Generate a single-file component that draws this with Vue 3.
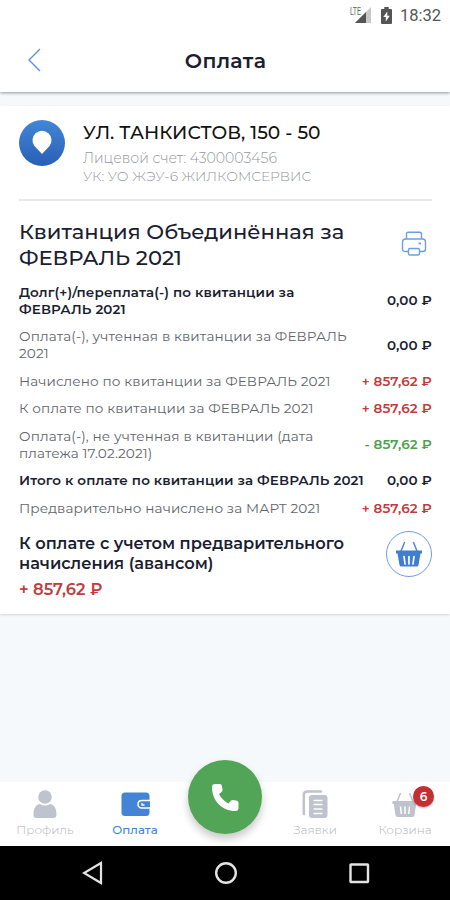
<template>
  <div class="screen">
    <header class="header">
      <div class="status-bar">
        <svg class="signal" width="22" height="18" viewBox="0 0 22 18">
          <path d="M21 1v16H5z" fill="#c9c9c9" />
          <path d="M16 6V17H5z" fill="#555" />
          <text x="0" y="9" font-size="11" textLength="11" lengthAdjust="spacingAndGlyphs">LTE</text>
        </svg>
        <svg class="battery" width="11" height="17" viewBox="0 0 11 17">
          <path d="M3.300 0h4.400v2H10q1 0 1 1v13q0 1-1 1H1q-1 0-1-1V3q0-1 1-1h2.300z" fill="#555" />
          <path d="M6.300 4.500 2.300 10h2.500v4.500L8.800 8.800H6.300z" fill="#fff" />
        </svg>
        <span class="clock">18:32</span>
      </div>
      <div class="nav-bar">
        <svg class="back" width="14" height="24" viewBox="0 0 14 24">
          <path d="M12 1 1 12 12 23" fill="none" stroke="#5d92df" stroke-width="1.400" />
        </svg>
        <h1>Оплата</h1>
      </div>
    </header>

    <main class="content">
      <section class="card">
        <div class="account">
          <svg width="46" height="46" viewBox="0 0 46 46">
            <defs>
              <linearGradient id="pin" x1="0" y1="0" x2="0" y2="1">
                <stop offset="0" stop-color="#4486d6" />
                <stop offset="1" stop-color="#285fb6" />
              </linearGradient>
            </defs>
            <circle cx="23" cy="23" r="23" fill="url(#pin)" />
            <path d="M23 34 15.500 26A9.500 9.500 0 1 1 30.500 26Z" fill="#fff" />
          </svg>
          <div class="account-info">
            <div class="address">УЛ. ТАНКИСТОВ, 150 - 50</div>
            <div class="number">Лицевой счет: 4300003456</div>
            <div class="company">УК: УО ЖЭУ-6 ЖИЛКОМСЕРВИС</div>
          </div>
        </div>

        <div class="receipt-title">
          <h2>Квитанция Объединённая за<br />ФЕВРАЛЬ 2021</h2>
          <svg width="26" height="26" viewBox="0 0 26 26" fill="none" stroke="#6d9ee3" stroke-width="1.400">
            <path d="M5.500 8V3q0-1.800 1.800-1.800h11.400q1.800 0 1.800 1.800v5" />
            <path d="M7.500 20.500H4q-2.500 0-2.500-2.500v-7Q1.500 8 4.500 8h17q3 0 3 3v7q0 2.500-2.500 2.500h-3.500" />
            <rect x="7.500" y="17.500" width="11" height="6.500" rx="1.500" />
            <path d="M17.500 12.500h2.500" stroke-width="1.800" />
          </svg>
        </div>

        <div class="rows">
          <div v-for="row in rows" :key="row.key" class="row" :class="row.key">
            <div class="label">
              <div v-for="line in row.lines" :key="line">{{ line }}</div>
            </div>
            <div class="amount" :class="row.kind">{{ row.amount }}</div>
          </div>
        </div>

        <div class="total">
          <div>
            <div class="total-label">К оплате с учетом предварительного<br />начисления (авансом)</div>
            <div class="total-amount">+ 857,62 ₽</div>
          </div>
          <button class="cart-button">
            <svg width="28" height="26" viewBox="0 0 28 26">
              <path d="M6 10 9.500 1.500M22 10 18.500 1.500" stroke="#4b88d6" stroke-width="1.500" stroke-linecap="round" />
              <path d="M1 9.500h26v3h-1.500L23.500 24q-.3 1.500-2 1.500h-15q-1.700 0-2-1.500L2.500 12.500H1z" fill="#3f7fd2" />
              <path d="m9 15.500 1 7.500M14 15.500V23M19 15.500 18 23" stroke="#fff" stroke-width="1.700" stroke-linecap="round" />
            </svg>
          </button>
        </div>
      </section>
    </main>

    <nav class="tabs">
      <div class="tab profile">
        <svg width="24" height="28" viewBox="0 0 24 28" fill="#bec3cd">
          <circle cx="12" cy="7" r="6.800" />
          <path d="M.5 24.500C.5 18 3 14.500 7 14q5 3 10 0c4 .5 6.500 4 6.500 10.500q0 3.500-3 3.500h-17q-3 0-3-3.500z" />
        </svg>
        <span>Профиль</span>
      </div>
      <div class="tab payment active">
        <svg width="29" height="28" viewBox="0 0 29 28">
          <rect x=".5" y="2.500" width="28" height="23.500" rx="3.500" fill="#4384d6" />
          <path d="M29 10.500h-8q-4 0-4 3.700t4 3.700h8" fill="#4384d6" stroke="#fff" stroke-width="1.500" />
          <path d="M21 13v2h2.500" fill="none" stroke="#fff" stroke-width="1.300" />
        </svg>
        <span>Оплата</span>
      </div>
      <div class="tab call">
        <button class="call-button">
          <svg width="28" height="29" viewBox="0 0 28 29">
            <path d="M4 1h5q1.500 0 1.800 1.600l.7 4q.2 1.500-.8 2.300L8 11q3 6 9.500 9.500l2.300-2.800q.8-1 2.200-.7l4 .8q1.500.4 1.500 1.900V25q0 3-3 3C11 28 1 18 1 4q0-3 3-3z" fill="#fff" />
          </svg>
        </button>
      </div>
      <div class="tab requests">
        <svg width="26" height="28" viewBox="0 0 26 28">
          <path d="M1.800 24V5q0-3.500 3.500-3.500H19" fill="none" stroke="#bec3cd" stroke-width="2.500" stroke-linecap="round" />
          <rect x="7" y="5" width="18.500" height="23" rx="3" fill="#bec3cd" />
          <path d="M11.500 10.500h9M11.500 14.500h9M11.500 19h9M11.500 23.500h9" stroke="#fff" stroke-width="1.500" />
        </svg>
        <span>Заявки</span>
      </div>
      <div class="tab cart">
        <div class="tab-icon">
          <svg width="26" height="28" viewBox="0 0 26 28">
            <path d="M5 12 8.500 3M21 12 17.500 3" stroke="#bec3cd" stroke-width="1.500" />
            <path d="M.5 11h25v3h-1.300L22.500 25q-.3 2-2 2h-15q-1.700 0-2-2L1.800 14H.5z" fill="#bec3cd" />
            <path d="m8.500 16.500.8 7.500M13 16.500V24M17.500 16.500l-.8 7.500" stroke="#fff" stroke-width="1.500" />
          </svg>
          <span class="badge">6</span>
        </div>
        <span>Корзина</span>
      </div>
    </nav>

    <footer class="system-bar">
      <svg width="21" height="24" viewBox="0 0 21 24">
        <path d="M19 2v20L2 12z" fill="none" stroke="#e4e4e4" stroke-width="2.200" />
      </svg>
      <svg width="24" height="24" viewBox="0 0 24 24">
        <circle cx="12" cy="12" r="9.800" fill="none" stroke="#e4e4e4" stroke-width="2.400" />
      </svg>
      <svg width="21" height="21" viewBox="0 0 21 21">
        <rect x="1.500" y="1.500" width="17.500" height="17.500" rx=".5" fill="none" stroke="#e4e4e4" stroke-width="2.400" />
      </svg>
    </footer>
  </div>
</template>

<script setup>
const rows = [
  {
    key: 'debt',
    lines: ['Долг(+)/переплата(-) по квитанции за', 'ФЕВРАЛЬ 2021'],
    amount: '0,00 ₽',
    kind: 'zero',
  },
  {
    key: 'paid',
    lines: ['Оплата(-), учтенная в квитанции за ФЕВРАЛЬ', '2021'],
    amount: '0,00 ₽',
    kind: 'zero',
  },
  {
    key: 'charged',
    lines: ['Начислено по квитанции за ФЕВРАЛЬ 2021'],
    amount: '+ 857,62 ₽',
    kind: 'plus',
  },
  {
    key: 'due',
    lines: ['К оплате по квитанции за ФЕВРАЛЬ 2021'],
    amount: '+ 857,62 ₽',
    kind: 'plus',
  },
  {
    key: 'unpaid',
    lines: ['Оплата(-), не учтенная в квитанции (дата', 'платежа 17.02.2021)'],
    amount: '- 857,62 ₽',
    kind: 'minus',
  },
  {
    key: 'sum',
    lines: ['Итого к оплате по квитанции за ФЕВРАЛЬ 2021'],
    amount: '0,00 ₽',
    kind: 'zero',
  },
  {
    key: 'advance',
    lines: ['Предварительно начислено за МАРТ 2021'],
    amount: '+ 857,62 ₽',
    kind: 'plus',
  },
]
</script>

<style>
body {
  margin: 0;
}
</style>

<style scoped>
.screen {
  display: flex;
  flex-direction: column;
  width: 450px;
  height: 900px;
  overflow: hidden;
  background: #f5f9fc;
  color: #1b1d30;
  font-family: Montserrat, Inter, 'Open Sans', sans-serif;
  white-space: nowrap;
}
h1,
h2 {
  margin: 0;
}
svg {
  flex: none;
  display: block;
}
button {
  display: flex;
  align-items: center;
  justify-content: center;
  padding: 0;
  box-sizing: border-box;
}
.header {
  height: 92px;
  background: #fff;
  box-shadow: 0 1px 3px rgba(0, 0, 0, 0.4);
  z-index: 1;
}
.status-bar {
  display: flex;
  align-items: center;
  height: 30px;
  padding: 0 9px 0 0;
  justify-content: flex-end;
}
.signal {
  margin-right: 9px;
}
.signal text {
  font-family: Roboto, sans-serif;
  fill: #666;
}
.battery {
  margin-right: 8px;
}
.clock {
  font: 400 16.5px Roboto, sans-serif;
  color: #555;
}
.nav-bar {
  display: flex;
  align-items: center;
  height: 60px;
  padding: 0 28px;
}
h1 {
  flex: 1;
  margin-right: 13px;
  text-align: center;
  font-size: 20.5px;
  font-weight: 600;
  letter-spacing: 0.3px;
}
.content {
  flex: 1;
  padding-top: 14px;
}
.card {
  height: 508px;
  padding: 0 18px 0 19px;
  box-sizing: border-box;
  background: #fff;
  box-shadow: 0 1px 2px rgba(0, 0, 0, 0.14);
}
.account {
  display: flex;
  gap: 18px;
  height: 95px;
  padding-top: 14px;
  box-sizing: border-box;
  border-bottom: 2px solid #e8e8e8;
}
.address {
  margin-bottom: 3px;
  line-height: 26px;
  font-size: 18.6px;
  font-weight: 500;
  color: #111;
}
.number,
.company {
  line-height: 18px;
  font-size: 14.1px;
  font-weight: 300;
  color: #94979c;
}
.company {
  font-size: 13.8px;
}
.receipt-title {
  display: flex;
  justify-content: space-between;
  align-items: center;
  padding: 18px 5px 0 0;
}
.receipt-title svg {
  margin-top: -2px;
}
h2 {
  font-size: 21.1px;
  line-height: 25.5px;
  font-weight: 500;
}
.rows {
  display: flex;
  flex-direction: column;
  gap: 11.1px;
  padding-top: 14px;
}
.row {
  display: flex;
  justify-content: space-between;
  align-items: center;
  line-height: 16.6px;
}
.label {
  color: #62656b;
  font-size: 13.6px;
  font-weight: 400;
  letter-spacing: 0.12px;
}
.debt .label,
.sum .label {
  color: #1b1d30;
  font-weight: 600;
  font-size: 13.49px;
}
.amount {
  font-size: 13.49px;
  font-weight: 600;
  letter-spacing: 0.12px;
}
.plus,
.total-amount {
  color: #c43b3d;
}
.minus {
  color: #4ba34e;
}
.total {
  display: flex;
  justify-content: space-between;
  padding-top: 16px;
}
.total-label {
  line-height: 20px;
  font-size: 16.25px;
  font-weight: 600;
}
.total-amount {
  margin-top: 5px;
  line-height: 22px;
  font-size: 16.3px;
  font-weight: 600;
}
.cart-button {
  width: 46px;
  height: 46px;
  margin-top: -2px;
  border: 1.5px solid #6d9edf;
  border-radius: 50%;
  background: #fff;
}
.tabs {
  display: grid;
  grid-template-columns: repeat(5, 90px);
  height: 64px;
  background: #fff;
}
.tab {
  display: flex;
  flex-direction: column;
  align-items: center;
  gap: 5px;
  padding-top: 8px;
  font-size: 12px;
  line-height: 14px;
  font-weight: 300;
  color: #b0b4ba;
}
.active {
  color: #4384d6;
  font-size: 11.8px;
  font-weight: 500;
}
.call-button {
  flex: none;
  width: 74px;
  height: 74px;
  margin-top: -30px;
  border: 0;
  border-radius: 50%;
  background: #52a456;
  box-shadow: 0 5px 8px rgba(0, 0, 0, 0.22);
}
.tab-icon {
  position: relative;
}
.badge {
  position: absolute;
  top: -4px;
  left: 21px;
  width: 21px;
  height: 21px;
  border-radius: 50%;
  background: #c52f33;
  box-shadow: 0 1px 2px rgba(0, 0, 0, 0.3);
  color: #fff;
  font-size: 12px;
  line-height: 21px;
  font-weight: 600;
  text-align: center;
}
.system-bar {
  display: flex;
  align-items: center;
  justify-content: space-between;
  height: 54px;
  padding: 0 80px 0 82px;
  box-sizing: border-box;
  background: #000;
}
</style>
